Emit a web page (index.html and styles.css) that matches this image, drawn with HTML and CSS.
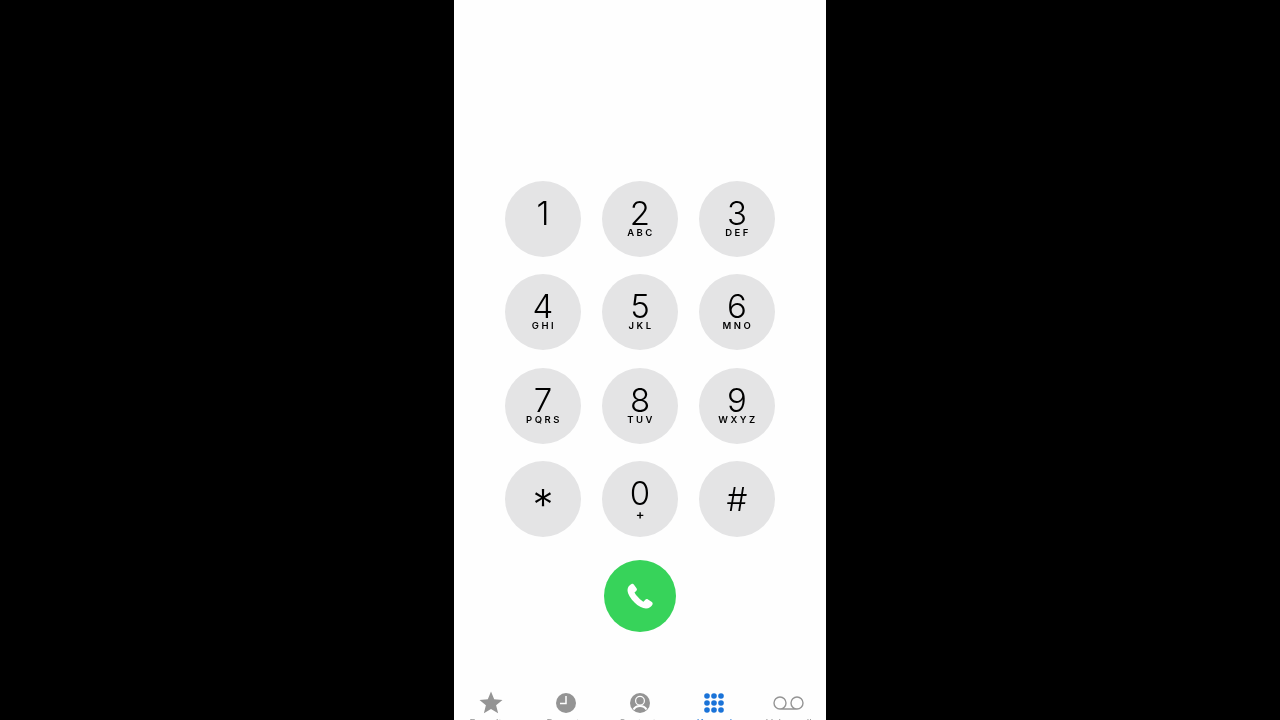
FILE: index.html
```html
<!DOCTYPE html>
<html lang="en">
<head>
    <meta charset="UTF-8">
    <title>Keypad</title>
    <link rel="stylesheet" href="styles.css">
</head>
<body>

<article class="phone">
    <section class="keypad">
        <button class="key"><span class="digit">1</span></button>
        <button class="key"><span class="digit">2</span><span class="letters">ABC</span></button>
        <button class="key"><span class="digit">3</span><span class="letters">DEF</span></button>
        <button class="key"><span class="digit">4</span><span class="letters">GHI</span></button>
        <button class="key"><span class="digit">5</span><span class="letters">JKL</span></button>
        <button class="key"><span class="digit">6</span><span class="letters">MNO</span></button>
        <button class="key"><span class="digit">7</span><span class="letters">PQRS</span></button>
        <button class="key"><span class="digit">8</span><span class="letters">TUV</span></button>
        <button class="key"><span class="digit">9</span><span class="letters">WXYZ</span></button>
        <button class="key star"><span class="digit">*</span></button>
        <button class="key"><span class="digit">0</span><span class="plus">+</span></button>
        <button class="key hash"><span class="digit">#</span></button>
    </section>

    <button class="call">
        <svg width="26" height="26" viewBox="0 0 26 26">
            <path fill="#fff" d="M4.500 1C2.500 2 .5 4 .5 7c0 4 3.500 9 7 12.500 3.500 3.500 8 6 11.500 6 3 0 5.500-2 6.500-4 .5-1.200 0-2-1-2.700l-3.500-2.300c-1-.6-2-.5-2.700.3l-1.800 2C14.500 18 8.500 12 7.500 9.500l1.700-1.500c.8-.8 1-1.700.3-2.700L6.800 1.500C6.200.7 5.500.5 4.500 1Z"/>
        </svg>
    </button>

    <nav class="tabs">
        <div class="tab">
            <svg width="24" height="24" viewBox="0 0 24 24">
                <path fill="#949494" d="M12 .5l3.200 7.800 8.300.6-6.400 5.300 2 8.100L12 18l-7.100 4.300 2-8.100L.5 8.900l8.300-.6z"/>
            </svg>
            <span>Favorites</span>
        </div>
        <div class="tab">
            <svg width="24" height="24" viewBox="0 0 24 24">
                <circle cx="12" cy="12" r="10" fill="#949494"/>
                <path fill="none" stroke="#fff" stroke-width="1.500" d="M12 5v7.500H6"/>
            </svg>
            <span>Recents</span>
        </div>
        <div class="tab">
            <svg width="24" height="24" viewBox="0 0 24 24">
                <circle cx="12" cy="12" r="10" fill="#949494"/>
                <circle cx="12" cy="9.800" r="4.400" fill="#949494" stroke="#fff" stroke-width="1.200"/>
                <path fill="none" stroke="#fff" stroke-width="2" d="M5.500 18.500c1.500-2.600 3.800-3.500 6.500-3.500s5 .9 6.500 3.500"/>
            </svg>
            <span>Contacts</span>
        </div>
        <div class="tab active">
            <svg width="24" height="24" viewBox="0 0 24 24" fill="#1a73d8">
                <circle cx="5" cy="5" r="2.800"/><circle cx="12" cy="5" r="2.800"/><circle cx="19" cy="5" r="2.800"/>
                <circle cx="5" cy="12" r="2.800"/><circle cx="12" cy="12" r="2.800"/><circle cx="19" cy="12" r="2.800"/>
                <circle cx="5" cy="19" r="2.800"/><circle cx="12" cy="19" r="2.800"/><circle cx="19" cy="19" r="2.800"/>
            </svg>
            <span>Keypad</span>
        </div>
        <div class="tab">
            <svg width="32" height="24" viewBox="0 0 32 24">
                <path fill="none" stroke="#949494" stroke-width="1.400" d="M7 18a6 6 0 1 1 0-12 6 6 0 0 1 0 12h17a6 6 0 1 1 0-12 6 6 0 0 1 0 12"/>
            </svg>
            <span>Voicemail</span>
        </div>
    </nav>
</article>

</body>
</html>
```

FILE: styles.css
```css
* {
    box-sizing: border-box;
}

html,
body {
    height: 100%;
}

body {
    margin: 0;
    display: flex;
    justify-content: center;
    overflow: hidden;
    background-color: #000;
    font-family: Inter, "Liberation Sans", sans-serif;
}

button {
    padding: 0;
    border: 0;
    font-family: inherit;
}

.phone {
    width: 372px;
    height: 720px;
    padding-top: 181px;
    overflow: hidden;
    display: flex;
    flex-direction: column;
    align-items: center;
    background-color: #fefefe;
    filter: blur(.35px);
}

.keypad {
    display: grid;
    grid-template-columns: repeat(3, 76px);
    grid-auto-rows: 76px;
    column-gap: 21px;
    row-gap: 17.33px;
}

.key {
    display: flex;
    flex-direction: column;
    align-items: center;
    padding-top: 17px;
    border-radius: 50%;
    background-color: #e4e4e5;
    color: #000;
}

.key.hash {
    padding-top: 23px;
}

.key.star {
    padding-top: 29px;
}

.digit {
    height: 30px;
    font-size: 33px;
    font-weight: 340;
    line-height: 30px;
}

.star .digit {
    font-size: 42px;
    font-weight: 360;
}

.letters {
    padding-left: 2px;
    font-size: 9.500px;
    font-weight: 600;
    line-height: 10px;
    letter-spacing: 2.500px;
}

.plus {
    font-size: 13px;
    font-weight: 600;
    line-height: 12px;
}

.call {
    width: 72px;
    height: 72px;
    flex-shrink: 0;
    margin-top: 23px;
    display: flex;
    align-items: center;
    justify-content: center;
    border-radius: 50%;
    background-color: #37d35a;
}

.tabs {
    width: 100%;
    flex-shrink: 0;
    margin-top: 59px;
    display: flex;
}

.tab {
    flex: 1;
    display: flex;
    flex-direction: column;
    align-items: center;
    color: #949494;
    font-size: 10px;
    line-height: 12px;
}

.tab svg {
    display: block;
    margin-bottom: 2px;
}

.tab.active {
    color: #1a73d8;
}
```
